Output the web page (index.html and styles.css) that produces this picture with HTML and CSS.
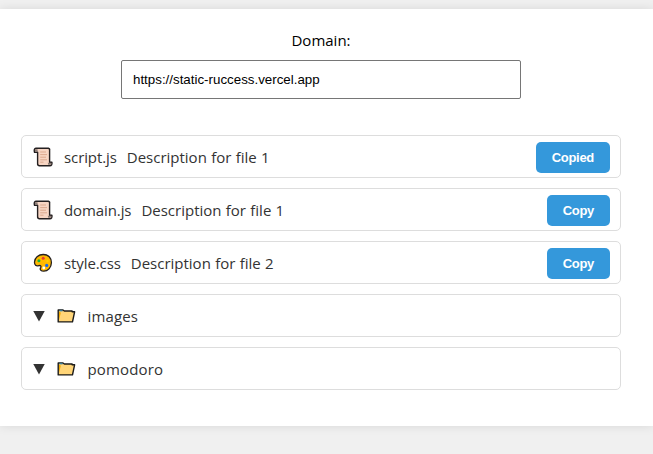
FILE: index.html
```
<!DOCTYPE html>
<html lang="en">
<head>
<meta charset="utf-8">
<title>Files</title>
<link rel="stylesheet" href="styles.css">
</head>
<body>
<svg class="defs" aria-hidden="true">
  <symbol id="scroll" viewBox="0 0 20 20">
    <path d="M3 1.2H15.4Q17 1.6 16.6 3.4V15.2H18.9Q19.4 18.7 16.8 18.7H6.2Q4.4 18.3 4.6 16.2V5.2H1.5Q.5 1.7 3 1.2Z" fill="#f7d5c3" stroke="#241f20" stroke-width="1.4" stroke-linejoin="round"/>
    <path d="M2 2.2H4.6V4.7H2ZM14.8 15.7H18.2V17.8H15.2Z" fill="#8a7b75"/>
    <path d="M7.2 5H13M7.2 7.6H14M7.2 10.2H13M7.2 12.8H14M7.2 15.2H10.5" stroke="#dba98f" stroke-width="1"/>
  </symbol>
  <symbol id="palette" viewBox="0 0 20 20">
    <path d="M10.2 1.5C15.3 1.4 18.5 5 18.4 9.8C18.3 14.8 14.8 18.2 10.8 18.2C7.8 18.2 6.5 16.4 7.7 14.6C8.4 13 7.6 12.2 5.8 12.6C3 13.3 1.4 12 1.5 9C1.6 4.8 5.3 1.6 10.2 1.5Z" fill="#ffb900" stroke="#241f20" stroke-width="1.3"/>
    <circle cx="5.9" cy="7.7" r="1.5" fill="#16b33a"/>
    <circle cx="10.2" cy="5.2" r="1.5" fill="#e83b32"/>
    <circle cx="14.5" cy="8" r="1.2" fill="#ffcf00"/>
    <circle cx="13.7" cy="12.4" r="1.6" fill="#1768ed"/>
    <circle cx="10.8" cy="15" r="1.4" fill="#fff"/>
  </symbol>
  <symbol id="folder" viewBox="0 0 20 20">
    <path d="M2.2 15.9V4H7L8.3 5H16.1V5.8H18.6L16.5 15.9H2.2Z" fill="#ffd578" stroke="#1b1a19" stroke-width="1.4" stroke-linejoin="round"/>
    <path d="M3 5.3L4.8 6.8L3 14Z" fill="#f0a800"/>
    <path d="M3.4 4.6H6.6" stroke="#397d9b" stroke-width="1.5"/>
  </symbol>
</svg>
<main class="container">
  <label class="domain-label" for="domain">Domain:</label>
  <input class="domain-input" id="domain" type="text" value="https://static-ruccess.vercel.app">
  <ul class="files">
    <li class="item"><svg class="icon"><use href="#scroll"/></svg><span class="name">script.js</span><span class="desc">Description for file 1</span><button class="copy">Copied</button></li>
    <li class="item"><svg class="icon"><use href="#scroll"/></svg><span class="name">domain.js</span><span class="desc">Description for file 1</span><button class="copy">Copy</button></li>
    <li class="item"><svg class="icon"><use href="#palette"/></svg><span class="name">style.css</span><span class="desc">Description for file 2</span><button class="copy">Copy</button></li>
    <li class="item folder"><span class="arrow"></span><svg class="icon"><use href="#folder"/></svg><span class="name">images</span></li>
    <li class="item folder"><span class="arrow"></span><svg class="icon"><use href="#folder"/></svg><span class="name">pomodoro</span></li>
  </ul>
</main>
</body>
</html>
```
FILE: styles.css
```
* { box-sizing: border-box; }
body {
  margin: 0;
  padding-top: 9px;
  height: 454px;
  overflow: hidden;
  background: #f0f0f0;
  color: #000;
  font: 15px/21px "Open Sans", sans-serif;
  letter-spacing: -0.1px;
}
.defs { display: block; width: 0; height: 0; }
.container {
  display: flex;
  flex-direction: column;
  align-items: center;
  height: 417px;
  padding: 21px 32px 0 21px;
  background: #fff;
  box-shadow: 0 0 10px rgba(0, 0, 0, 0.1);
}
.domain-label { height: 21px; letter-spacing: 0; }
.domain-input {
  width: 400px;
  height: 39px;
  margin-top: 9px;
  padding: 0 11px;
  border: 1px solid #767676;
  border-radius: 2px;
  font: 13.333px "Liberation Sans", Arial, sans-serif;
}
.files {
  display: flex;
  flex-direction: column;
  gap: 10px;
  width: 600px;
  margin: 36px 0 0;
  padding: 0;
  list-style: none;
}
.item {
  display: flex;
  align-items: center;
  height: 43px;
  padding: 1px 10px 0 11px;
  border: 1px solid #ddd;
  border-radius: 5px;
  color: #333;
}
.icon { flex: none; width: 20px; height: 20px; margin-right: 11px; }
.name, .desc { padding-top: 1px; }
.desc { margin-left: 10px; letter-spacing: 0; word-spacing: 0.4px; }
.folder .name { margin-left: 0.5px; letter-spacing: 0.15px; }
.copy {
  height: 31px;
  margin-left: auto;
  padding: 1px 16px 0;
  border: 0;
  border-radius: 5px;
  background: #3498db;
  color: #fff;
  font: bold 13px "Liberation Sans", Arial, sans-serif;
  letter-spacing: -0.3px;
}
.arrow {
  width: 12px;
  height: 11px;
  margin-right: 11px;
  background: #333;
  clip-path: polygon(0 0, 100% 0, 50% 100%);
}
```
